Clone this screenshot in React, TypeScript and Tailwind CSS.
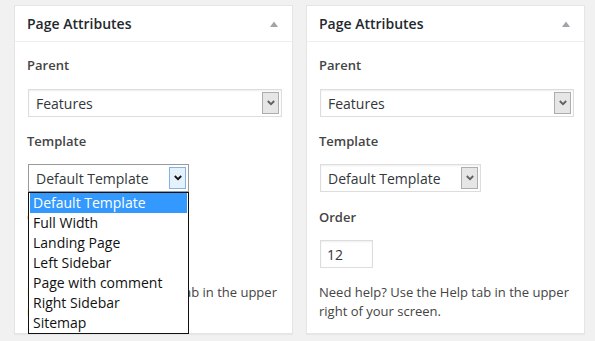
const templates = [
  "Default Template",
  "Full Width",
  "Landing Page",
  "Left Sidebar",
  "Page with comment",
  "Right Sidebar",
  "Sitemap",
];

function Chevron({ color }: { color: string }) {
  return (
    <svg width="8" height="6" viewBox="0 0 8 6">
      <path d="M0.8 1 L4 4.2 L7.2 1" fill="none" stroke={color} strokeWidth="1.8" />
    </svg>
  );
}

function SelectBox({
  value,
  width,
  open,
}: {
  value: string;
  width: string;
  open?: boolean;
}) {
  return (
    <div
      className={`flex h-[28px] items-center justify-between border bg-white pr-[2px] pl-[7px] ${width} ${
        open ? "border-[#9a9a9a]" : "border-[#dddddd] shadow-[inset_0_1px_2px_rgba(0,0,0,0.07)]"
      }`}
    >
      <span className="text-[14px] text-[#32373c]">{value}</span>
      <span
        className={`flex h-[22px] w-[17px] items-center justify-center border ${
          open ? "border-[#7eb4ea] bg-[#e5f1fb]" : "border-[#adadad] bg-[#e6e6e6]"
        }`}
      >
        <Chevron color={open ? "#111" : "#606060"} />
      </span>
    </div>
  );
}

function Box({ open }: { open?: boolean }) {
  return (
    <div className="w-[279px] border border-[#e5e5e5] bg-white shadow-[0_1px_1px_rgba(0,0,0,0.04)]">
      <div className="flex h-[36px] items-center justify-between border-b border-[#eeeeee] pl-[12px] pr-[14px]">
        <h2 className="text-[14px] font-semibold text-[#23282d]">Page Attributes</h2>
        <svg width="8" height="6" viewBox="0 0 8 6">
          <path d="M0 6 L4 0.5 L8 6 Z" fill="#a0a5aa" />
        </svg>
      </div>
      <div className="px-[12px] pb-[12px] text-[13px] text-[#444]">
        <p className="mt-[14px] h-[18px] font-semibold leading-[18px]">Parent</p>
        <div className="mt-[15px] pl-[1px]">
          <SelectBox value="Features" width="w-[254px]" />
        </div>
        <p className="mt-[15px] h-[18px] font-semibold leading-[18px]">Template</p>
        <div className="relative mt-[14px] pl-[1px]">
          <SelectBox value="Default Template" width="w-[161px]" open={open} />
          {open && (
            <ul className="absolute left-[1px] top-full z-10 w-[161px] border border-[#111] bg-white px-[1px] text-[14px] text-[#111]">
              {templates.map((t, i) => (
                <li
                  key={t}
                  className={`h-[20px] pl-[3px] leading-[20px] ${
                    i === 0 ? "bg-[#3399ff] text-white" : ""
                  }`}
                >
                  {t}
                </li>
              ))}
            </ul>
          )}
        </div>
        <p className="mt-[16px] h-[18px] font-semibold leading-[18px]">Order</p>
        <div className="mt-[14px] flex h-[28px] w-[53px] items-center border border-[#dddddd] pl-[6px] text-[14px] text-[#32373c] shadow-[inset_0_1px_2px_rgba(0,0,0,0.07)] ml-[1px]">
          12
        </div>
        <p className="mt-[15px] leading-[19px]">
          Need help? Use the Help tab in the upper
          <br />
          right of your screen.
        </p>
      </div>
    </div>
  );
}

export default function App() {
  return (
    <div
      className="flex h-[341px] w-[595px] items-start gap-[13px] bg-[#f1f1f1] pl-[14px] pt-[5px]"
      style={{ fontFamily: '"Open Sans", sans-serif' }}
    >
      <Box open />
      <Box />
    </div>
  );
}
